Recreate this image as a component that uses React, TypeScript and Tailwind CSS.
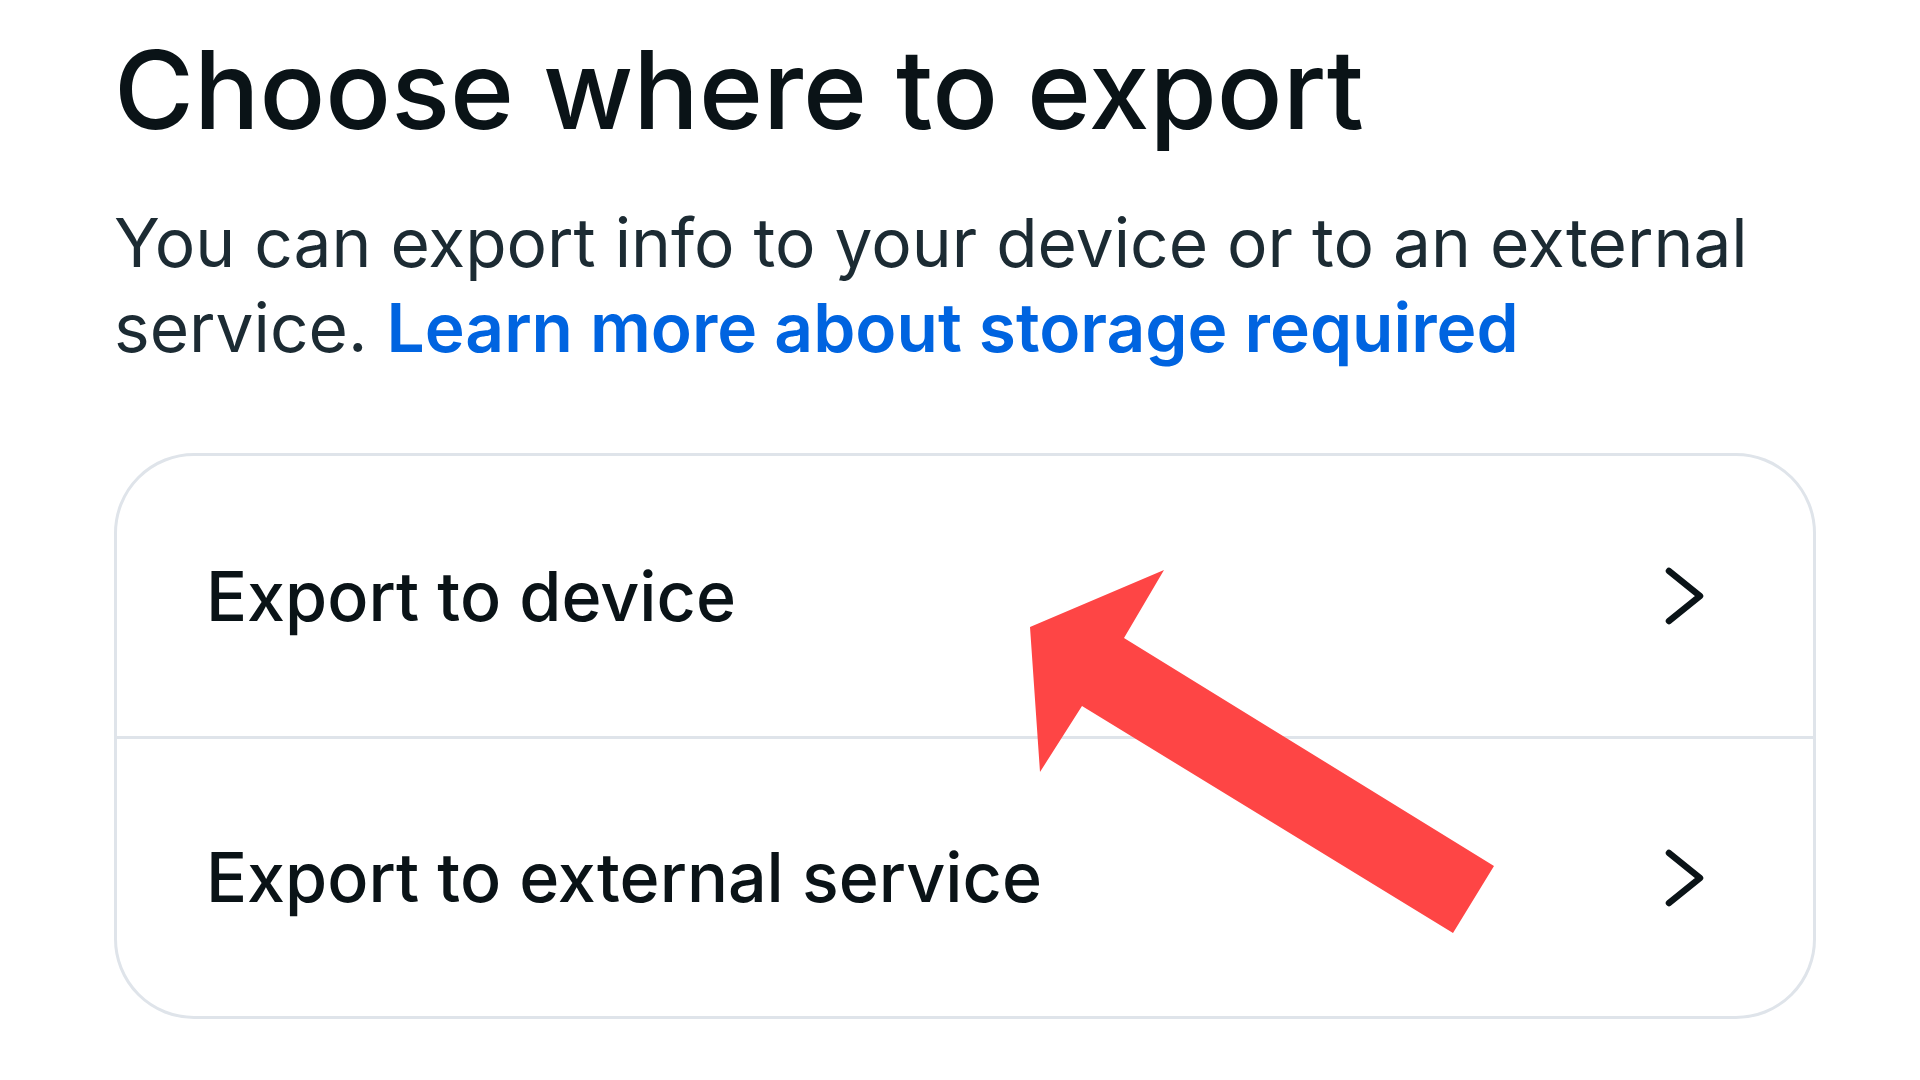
export default function App() {
  const rows = ['Export to device', 'Export to external service'];

  return (
    <div className="relative min-h-screen w-full bg-white font-['Inter',sans-serif] text-[#1c2b33]">
      <div className="pl-[114px] pr-[104px]">
        <h1 className="pt-[35px] text-[109px] leading-[109px] font-medium text-[#0a1317]">
          Choose where to export
        </h1>

        <p className="mt-[56px] text-[67.6px] leading-[85px]">
          You can export info to your device or to an external service.{' '}
          <a href="#" className="font-semibold text-[#0064e0]">
            Learn more about storage required
          </a>
        </p>

        <div className="mt-[83px] rounded-[80px] border-[3px] border-[#dfe4ea] bg-white">
          {rows.map((label, i) => (
            <div
              key={label}
              className={`flex h-[280px] items-center justify-between pl-[89px] pr-[108px] ${
                i > 0 ? 'border-t-[3px] border-[#dfe4ea]' : ''
              }`}
            >
              <span className="text-[68.2px] font-medium text-[#0a1317]">{label}</span>
              <svg width="40" height="58" viewBox="0 0 40 58" fill="none">
                <polyline
                  points="4,4 35,29 4,54"
                  stroke="#0a1317"
                  strokeWidth="6.5"
                  strokeLinecap="round"
                  strokeLinejoin="round"
                />
              </svg>
            </div>
          ))}
        </div>
      </div>

      {/* red annotation arrow */}
      <svg
        className="pointer-events-none absolute left-0 top-0"
        width="1920"
        height="1080"
        viewBox="0 0 1920 1080"
      >
        <polygon
          points="1164,570 1030,627 1040,772 1082,706 1453,933 1494,866 1124,638"
          fill="#fe4545"
        />
      </svg>
    </div>
  );
}
